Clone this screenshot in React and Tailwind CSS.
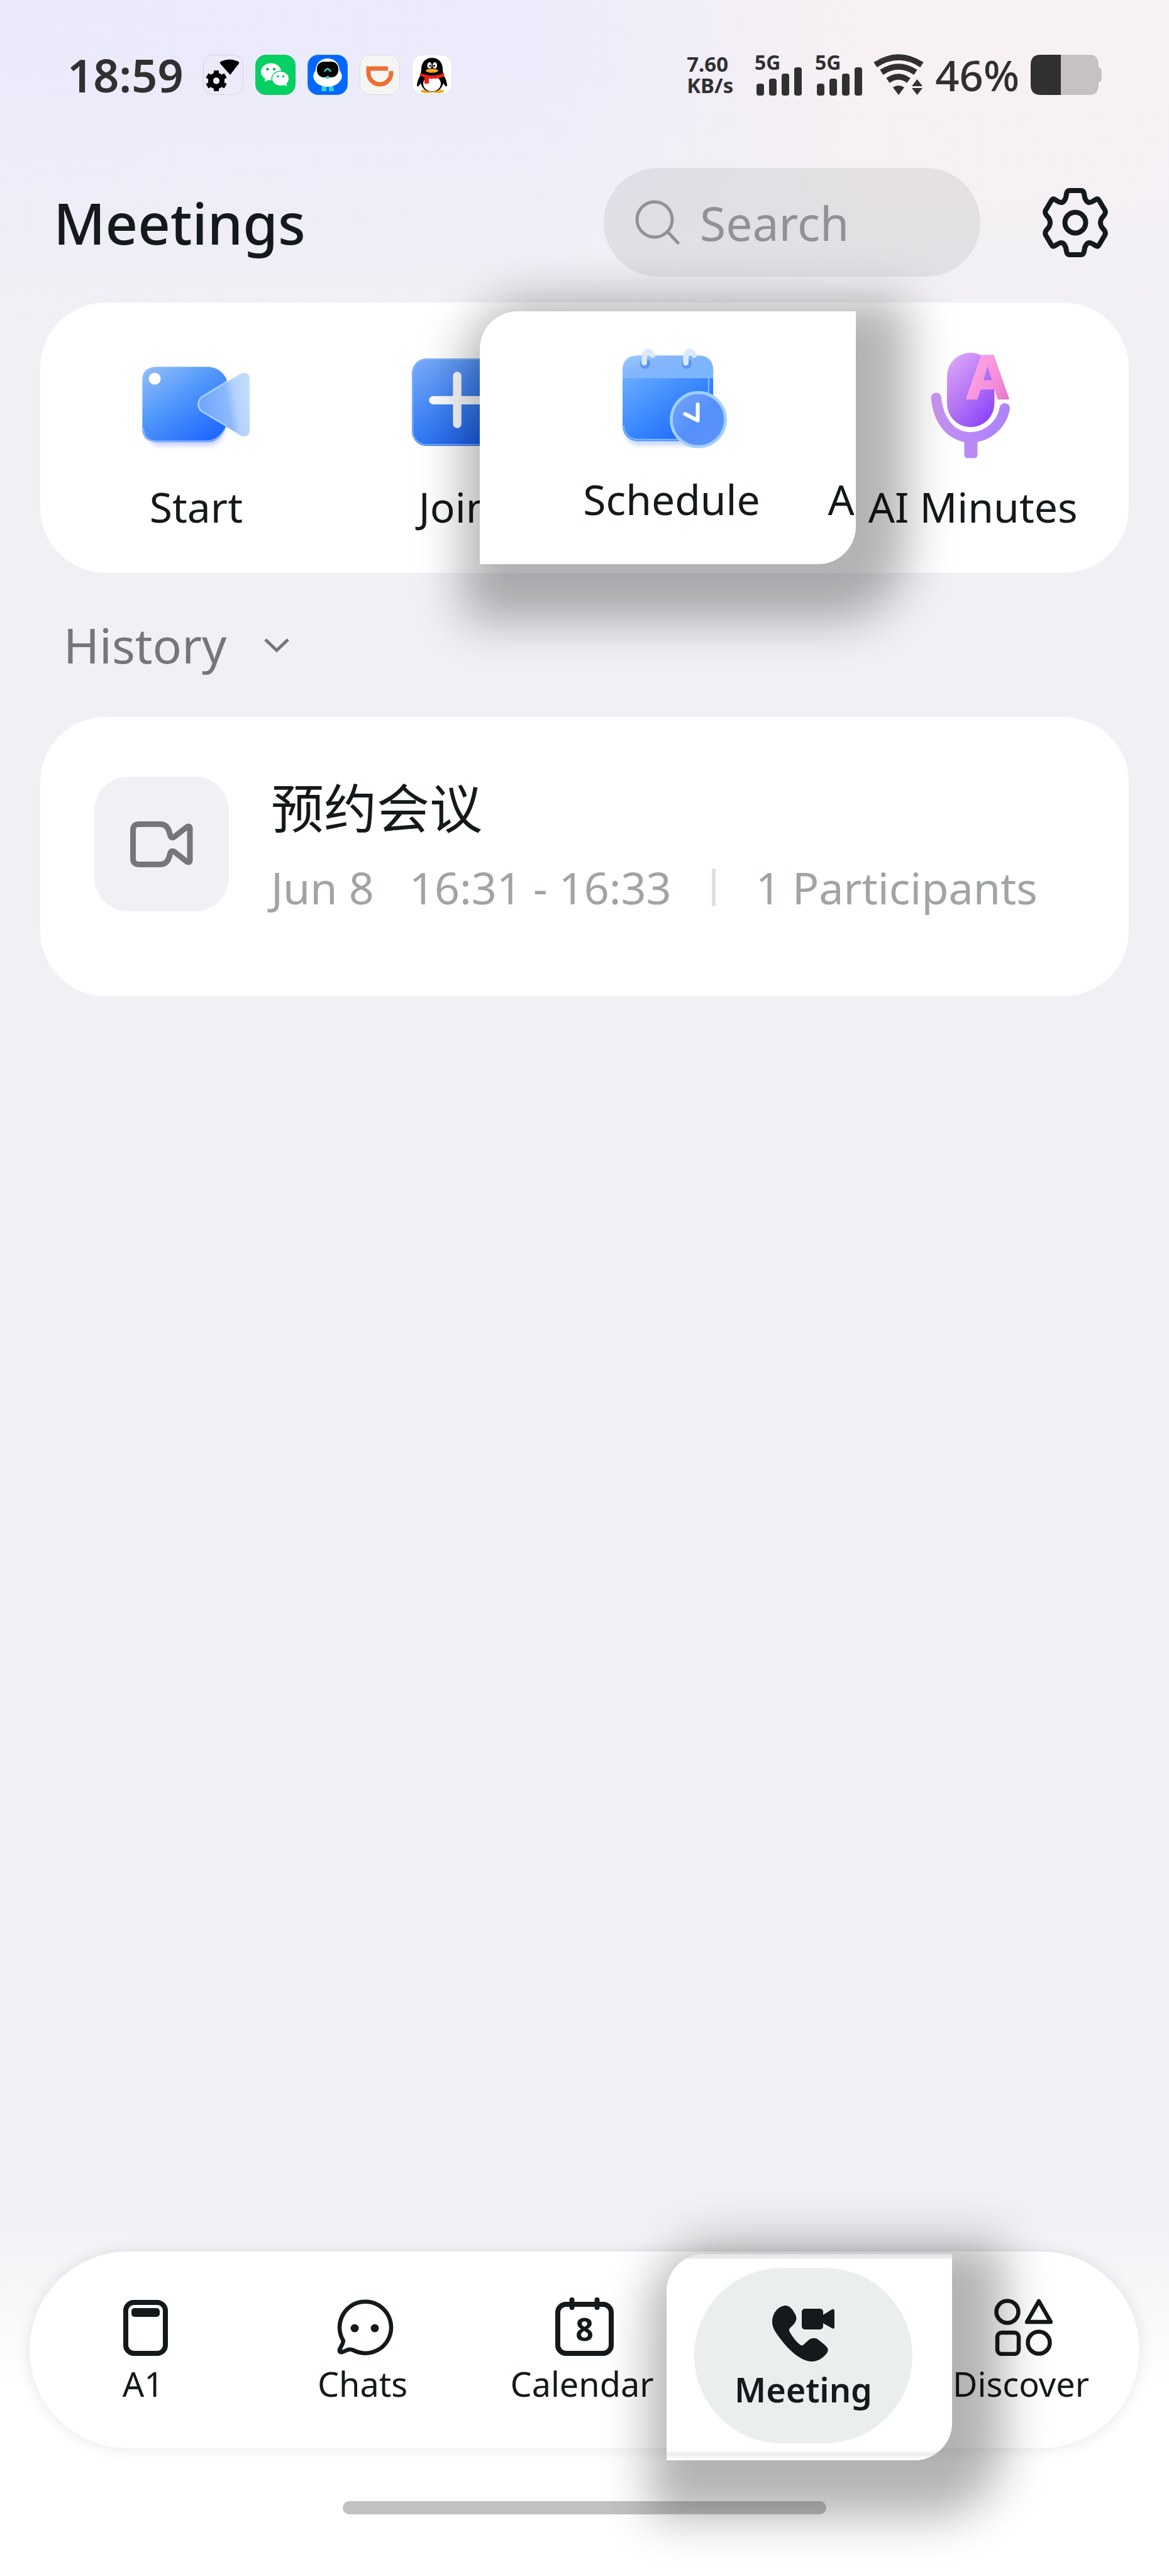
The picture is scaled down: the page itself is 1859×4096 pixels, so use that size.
import React from 'react';

// Status bar -----------------------------------------------------------

const AppTile = ({ fill, border, children }) => (
  <svg className="h-16 w-16 shrink-0" viewBox="0 0 64 64" aria-hidden="true">
    <rect x="0.5" y="0.5" width="63" height="63" rx="16" fill={fill} stroke={border} />
    {children}
  </svg>
);

const StatusApps = () => (
  <div className="flex items-center gap-[19px]">
    {/* Network tool */}
    <AppTile fill="none" border="#d3d2dd">
      <path d="M27 14Q26 11 30 10Q42 5 54 10Q58 11 57 14L43 32Z" fill="#000" />
      <g stroke="#000" strokeWidth="8">
        <circle cx="21" cy="41.5" r="9" fill="none" />
        <path d="M21 34V25M21 49V58M28 37.500L35.500 33M14 45.500L6.500 50M28 45.500L35.500 50M14 37.500L6.500 33" />
      </g>
      <circle cx="21" cy="41.5" r="5" fill="#efedfa" />
    </AppTile>
    {/* WeChat */}
    <AppTile fill="#05d162" border="#1bc26b">
      <ellipse cx="25" cy="27" rx="16" ry="13.5" fill="#fff" />
      <path d="M16 36L15 43L24 39Z" fill="#fff" />
      <ellipse cx="40" cy="38" rx="14.500" ry="12.500" fill="#05d162" />
      <ellipse cx="40" cy="38" rx="13" ry="11" fill="#fff" />
      <path d="M42 47L50 50L49 43Z" fill="#fff" />
      <g fill="#05b556">
        <circle cx="19.500" cy="23" r="2.200" />
        <circle cx="30" cy="23" r="2.200" />
        <circle cx="36" cy="34.500" r="1.800" />
        <circle cx="44.500" cy="34.500" r="1.800" />
      </g>
    </AppTile>
    {/* Assistant robot */}
    <AppTile fill="#0068ff" border="#2a79e8">
      <path d="M23 50H30V58H22ZM34 50H41L42 58H34Z" fill="#2fd3d0" />
      <path d="M32 6C44 6 51 15 51 25C55 30 56 36 53 40C49 47 41 51 32 51C23 51 14 47 11 40C8 36 9 30 13 25C13 15 20 6 32 6Z" fill="#fff" />
      <rect x="15" y="11" width="34" height="25" rx="11" fill="#000" />
      <path d="M27 27Q32 18 37 27" fill="none" stroke="#34d6c8" strokeWidth="2.500" />
      <circle cx="32" cy="36" r="2.500" fill="#34d6c8" />
    </AppTile>
    {/* Ride hailing */}
    <AppTile fill="#f6f5f4" border="#d9d8dc">
      <path d="M45 22H14V29A18 18 0 0 0 50 29V26" fill="none" stroke="#ec6f31" strokeWidth="7" />
    </AppTile>
    {/* Penguin */}
    <AppTile fill="#fff" border="#e2e1e8">
      <ellipse cx="24" cy="58" rx="10" ry="3" fill="#f2a81d" />
      <ellipse cx="41" cy="58" rx="10" ry="3" fill="#f2a81d" />
      <path d="M32 5C43 5 49 13 49 23L50 32C54 38 56 44 56 50C53 51 51 47 50 45C48 54 41 59 32 59C23 59 16 54 14 45C13 47 11 51 8 50C8 44 10 38 14 32L15 23C15 13 21 5 32 5Z" fill="#000" />
      <ellipse cx="32" cy="46" rx="14" ry="12.500" fill="#fff" />
      <ellipse cx="28" cy="17" rx="3.500" ry="5" fill="#fff" />
      <ellipse cx="36.500" cy="17" rx="3.500" ry="5" fill="#fff" />
      <circle cx="29" cy="17.500" r="1.600" fill="#000" />
      <circle cx="35.500" cy="17.500" r="1.600" fill="#000" />
      <ellipse cx="32" cy="25.500" rx="10" ry="3.200" fill="#f5a623" />
      <path d="M13 29Q32 37 51 29V35Q40 39 27 38V46H20V36Q16 35 13 33Z" fill="#e4211f" />
    </AppTile>
  </div>
);

const Signal = () => (
  <svg className="h-[90px] w-[75px]" viewBox="0 -12 75 90" fill="#303030" aria-hidden="true">
    <text x="0" y="25" className="text-[32px] font-bold">5G</text>
    <rect x="3" y="47" width="12" height="19" rx="4" />
    <rect x="23" y="39" width="12" height="27" rx="4" />
    <rect x="43" y="31" width="12" height="35" rx="4" />
    <rect x="63" y="21" width="12" height="45" rx="4" />
  </svg>
);

const WifiSignal = () => (
  <svg className="h-[66px] w-20" viewBox="0 0 80 66" aria-hidden="true">
    <g fill="none" stroke="#303030" strokeWidth="9.500">
      <path d="M3 17Q40 -7 77 17" />
      <path d="M13 29Q40 11 67 29" />
      <path d="M23 42Q40 30 56 42" />
    </g>
    <path d="M31 53Q40 47 49 53L40 65ZM69.500 40L78 51H61ZM61 54H78L69.500 65Z" fill="#303030" />
  </svg>
);

const Battery = () => (
  <svg className="h-16 w-[113px]" viewBox="0 0 113 64" aria-hidden="true">
    <path d="M48 0H93Q108 0 108 16V20Q113 21 113 28V36Q113 43 108 44V48Q108 64 93 64H48Z" fill="#c6c1c3" />
    <path d="M48 0H16Q0 0 0 16V48Q0 64 16 64H48Z" fill="#303030" />
  </svg>
);

const StatusBar = () => (
  <div className="flex h-[238px] items-center justify-between pl-[107px] pr-[107px] text-[#303030]">
    <div className="flex items-center gap-[31px]">
      <span className="text-[72px] font-semibold leading-none">18:59</span>
      <StatusApps />
    </div>
    <div className="flex items-center">
      <div className="mr-[34px] flex flex-col text-[33px] font-bold leading-[34px]">
        <span>7.60</span>
        <span>KB/s</span>
      </div>
      <div className="mr-[18px] flex gap-[21px]">
        <Signal />
        <Signal />
      </div>
      <WifiSignal />
      <span className="mx-[18px] text-[67px] font-medium leading-none">46%</span>
      <Battery />
    </div>
  </div>
);

// Header ---------------------------------------------------------------

const GearIcon = () => (
  <svg className="h-[110px] w-[106px]" viewBox="-53 -55 106 110" fill="none" stroke="#14191b" strokeWidth="8" strokeLinejoin="round" aria-hidden="true">
    <path d="M-9 -51H9Q13 -51 14 -46L15 -40Q19 -28 28 -34L33 -37Q36 -39 38 -35L47 -20Q49 -16 46 -12L42 -7Q38 0 42 7L46 12Q49 16 47 20L38 35Q36 39 33 37L28 34Q19 28 15 40L14 46Q13 51 9 51H-9Q-13 51 -14 46L-15 40Q-19 28 -28 34L-33 37Q-36 39 -38 35L-47 20Q-49 16 -46 12L-42 7Q-38 0 -42 -7L-46 -12Q-49 -16 -47 -20L-38 -35Q-36 -39 -33 -37L-28 -34Q-19 -28 -15 -40L-14 -46Q-13 -51 -9 -51Z" />
    <circle cx="0" cy="0" r="16.500" />
  </svg>
);

const Header = () => (
  <header className="mt-[29px] flex h-[173px] items-center pl-[85px] pr-24">
    <h1 className="flex-1 text-[90px] font-medium leading-[130px] text-[#14191b]">Meetings</h1>
    <label className="flex h-full w-[599px] items-center gap-8 rounded-full bg-black/[0.065] pl-[50px] pr-10">
      <svg className="h-[71px] w-[71px] shrink-0" viewBox="0 0 71 71" fill="none" stroke="#8f9296" strokeWidth="5" strokeLinecap="round" aria-hidden="true">
        <circle cx="31" cy="31" r="28" />
        <path d="M52 51L68 68" />
      </svg>
      <input
        type="text"
        aria-label="Search"
        placeholder="Search"
        className="w-full min-w-0 bg-transparent text-[75px] leading-[108px] outline-none placeholder:text-[#8f9296]"
      />
    </label>
    <button type="button" aria-label="Settings" className="ml-[98px]">
      <GearIcon />
    </button>
  </header>
);

// Quick actions --------------------------------------------------------

const StartIcon = () => (
  <svg className="h-[200px] w-[200px]" viewBox="-8 0 780 780" aria-hidden="true">
    <defs>
      <linearGradient id="startBody" x1="0.1" y1="0" x2="0.9" y2="1">
        <stop offset="0" stopColor="#8fbcf8" />
        <stop offset="0.400" stopColor="#5299fb" />
        <stop offset="1" stopColor="#1a60ff" />
      </linearGradient>
      <linearGradient id="startLens" x1="0" y1="0.200" x2="1" y2="0">
        <stop offset="0" stopColor="#70a6fc" />
        <stop offset="0.500" stopColor="#8db8fb" />
        <stop offset="0.650" stopColor="#b2d2fd" />
        <stop offset="1" stopColor="#c8e0fd" />
      </linearGradient>
      <filter id="soft" x="-20%" y="-20%" width="140%" height="150%">
        <feGaussianBlur stdDeviation="16" />
      </filter>
    </defs>
    <rect x="70" y="420" width="480" height="195" rx="90" fill="#8ca6f5" opacity="0.600" filter="url(#soft)" />
    <path d="M130 130H450Q530 130 570 205L578 470Q540 596 450 596H130Q48 590 48 510V210Q48 135 130 130Z" fill="url(#startBody)" />
    <path d="M54 510Q60 588 130 590H450Q530 585 568 500" fill="none" stroke="#8cc0fd" strokeWidth="7" />
    <path d="M660 172Q714 155 714 210V520Q714 575 660 558L415 405Q375 365 415 318Z" fill="url(#startLens)" />
    <path d="M572 498L415 405Q375 365 415 318L572 222" fill="none" stroke="#a4d3fd" strokeWidth="10" />
    <circle cx="125" cy="204" r="37" fill="#fff" />
  </svg>
);

const JoinIcon = () => (
  <svg className="h-[200px] w-[200px]" viewBox="0 0 780 780" aria-hidden="true">
    <defs>
      <linearGradient id="joinBody" x1="0.100" y1="0" x2="0.700" y2="1">
        <stop offset="0" stopColor="#78aafb" />
        <stop offset="0.500" stopColor="#4286f7" />
        <stop offset="1" stopColor="#1b62ee" />
      </linearGradient>
    </defs>
    <rect x="121" y="78" width="562" height="542" rx="90" fill="url(#joinBody)" />
    <rect x="127" y="84" width="550" height="528" rx="84" fill="none" stroke="#7db4fc" strokeWidth="7" />
    <path d="M402 186V484M253 337H551" stroke="#fff" strokeWidth="52" strokeLinecap="round" />
  </svg>
);

const ScheduleIcon = () => (
  <svg className="h-[200px] w-[200px]" viewBox="-14 8 780 780" aria-hidden="true">
    <defs>
      <linearGradient id="calBody" x1="0.100" y1="0.100" x2="0.800" y2="1">
        <stop offset="0" stopColor="#6fb0fd" />
        <stop offset="0.500" stopColor="#3f8bff" />
        <stop offset="1" stopColor="#1766ff" />
      </linearGradient>
      <linearGradient id="calTop" x1="0" y1="0" x2="1" y2="0.600">
        <stop offset="0" stopColor="#9cccfd" />
        <stop offset="0.400" stopColor="#85b5fb" />
        <stop offset="1" stopColor="#7ab5fd" />
      </linearGradient>
      <linearGradient id="clockFace" x1="0" y1="0" x2="1" y2="1">
        <stop offset="0" stopColor="#77a6fb" />
        <stop offset="0.500" stopColor="#5590fa" />
        <stop offset="1" stopColor="#5f93fb" />
      </linearGradient>
      <filter id="calSoft" x="-20%" y="-20%" width="140%" height="150%">
        <feGaussianBlur stdDeviation="14" />
      </filter>
    </defs>
    <rect x="90" y="480" width="560" height="190" rx="80" fill="#90aef0" opacity="0.500" filter="url(#calSoft)" />
    <rect x="72" y="115" width="562" height="530" rx="92" fill="url(#calBody)" />
    <path d="M72 252V207Q72 115 164 115H542Q634 115 634 207V252Z" fill="url(#calTop)" />
    <path d="M540 122Q606 130 606 207V545Q600 636 520 636H160Q85 625 78 550" fill="none" stroke="#78b9fe" strokeWidth="9" />
    <path d="M76 252H632" stroke="#7fbdfd" strokeWidth="5" />
    <g>
      <circle cx="212" cy="165" r="32" fill="#5b96ee" />
      <circle cx="470" cy="165" r="32" fill="#5b96ee" />
      <path d="M258 112Q245 82 218 92Q206 105 206 160M516 112Q503 82 476 92Q464 105 464 160" fill="none" stroke="#dbe9fc" strokeWidth="34" strokeLinecap="round" />
    </g>
    <circle cx="542" cy="512" r="168" fill="url(#clockFace)" stroke="#a0d0fd" strokeWidth="18" />
    <path d="M538 418V517L460 477" fill="none" stroke="#fff" strokeWidth="24" strokeLinecap="round" strokeLinejoin="round" />
  </svg>
);

const MinutesIcon = () => (
  <svg className="h-[200px] w-[200px]" viewBox="-27 28 780 780" aria-hidden="true">
    <defs>
      <linearGradient id="micBody" x1="0.100" y1="0" x2="0.800" y2="1">
        <stop offset="0" stopColor="#e0a9fb" />
        <stop offset="0.500" stopColor="#b678f4" />
        <stop offset="1" stopColor="#8b41fb" />
      </linearGradient>
      <linearGradient id="micStand" x1="0" y1="0" x2="1" y2="0.300">
        <stop offset="0" stopColor="#cb97f0" />
        <stop offset="1" stopColor="#b084fb" />
      </linearGradient>
      <linearGradient id="micLetter" x1="0" y1="0" x2="1" y2="1">
        <stop offset="0" stopColor="#fdb4ea" />
        <stop offset="0.600" stopColor="#f78fdb" />
        <stop offset="1" stopColor="#e06fc8" />
      </linearGradient>
    </defs>
    <rect x="203" y="70" width="294" height="462" rx="147" fill="url(#micBody)" />
    <path d="M136 350C150 500 235 595 350 595C460 595 545 510 561 415" fill="none" stroke="url(#micStand)" strokeWidth="64" strokeLinecap="round" />
    <rect x="310" y="600" width="82" height="124" rx="20" fill="#b98af4" />
    <text x="455" y="354" textAnchor="middle" fill="url(#micLetter)" stroke="url(#micLetter)" strokeWidth="10" strokeLinejoin="round" className="text-[372px] font-bold">A</text>
  </svg>
);

const Action = ({ icon, label }) => (
  <button type="button" className="flex w-full flex-col items-center text-[66px] leading-[80px] text-[#14191b]">
    {icon}
    <span className="mt-[15px] whitespace-nowrap">{label}</span>
  </button>
);

const LIFTED = 'absolute z-10 rounded-tl-[60px] rounded-br-[60px] shadow-[28px_36px_74px_54px_rgba(0,0,0,0.3)]';

const QuickActions = () => (
  <section className="mx-16 mt-[41px] rounded-[104px] bg-white px-[42px] pb-[66px] pt-[69px]">
    <ul className="grid grid-cols-4">
      <li><Action icon={<StartIcon />} label="Start" /></li>
      <li><Action icon={<JoinIcon />} label="Join" /></li>
      <li className="relative">
        {/* Raised panel around the Schedule action */}
        <div className={`${LIFTED} -left-[167px] -top-[55px] flex h-[402px] w-[598px] items-start bg-white pt-[43px]`}>
          <div className="ml-[100px] w-[411px] shrink-0">
            <Action icon={<ScheduleIcon />} label="Schedule" />
          </div>
          <span className="ml-[43px] mt-[215px] text-[66px] leading-[80px] text-[#14191b]">A</span>
        </div>
      </li>
      <li><Action icon={<MinutesIcon />} label="AI Minutes" /></li>
    </ul>
  </section>
);

// History --------------------------------------------------------------

const VideoIcon = () => (
  <svg className="h-[73px] w-[100px]" viewBox="0 0 100 73" fill="none" stroke="#74767a" strokeWidth="9" strokeLinejoin="round" aria-hidden="true">
    <path d="M14 4.500H48Q60 4.500 63 20Q65 29 71 24L90 9Q95 6 95 12V61Q95 67 90 64L71 49Q65 44 63 53Q60 68.500 48 68.500H14Q4.500 68.500 4.500 59V14Q4.500 4.500 14 4.500Z" />
  </svg>
);

const MeetingCard = ({ title, date, time, people }) => (
  <article className="mx-16 flex items-start gap-[67px] rounded-[104px] bg-white pb-[121px] pl-[86px] pr-10 pt-[95px]">
    <div className="flex h-[214px] w-[214px] shrink-0 items-center justify-center rounded-[54px] bg-[#f1f0f5]">
      <VideoIcon />
    </div>
    <div>
      <h2 className="font-['Noto_Sans_CJK_SC',sans-serif] text-[84px] leading-[92px] text-[#14191b]">{title}</h2>
      <p className="mt-8 flex items-center whitespace-nowrap text-[70px] leading-[104px] text-[#a0a4a3]">
        <span>{date}</span>
        <span className="ml-14">{time}</span>
        <span className="mx-16 h-[60px] w-[6px] bg-[#dfe2e2]" />
        <span>{people}</span>
      </p>
    </div>
  </article>
);

const History = () => (
  <main className="flex-1">
    <button type="button" className="ml-[101px] flex h-[229px] items-center gap-[60px] text-[77px] leading-[108px] text-[#74767a]">
      History
      <svg className="h-6 w-10" viewBox="0 0 40 24" fill="none" stroke="#74767a" strokeWidth="5" aria-hidden="true">
        <path d="M2 3L20 20L38 3" />
      </svg>
    </button>
    <MeetingCard title="预约会议" date="Jun 8" time="16:31 - 16:33" people="1 Participants" />
  </main>
);

// Bottom navigation ----------------------------------------------------

const DeviceIcon = () => (
  <svg className="h-[89px] w-[71px]" viewBox="0 0 71 89" aria-hidden="true">
    <rect x="4" y="4" width="63" height="81" rx="13" fill="none" stroke="#14191b" strokeWidth="8" />
    <rect x="13" y="13" width="45" height="14" rx="5" fill="#14191b" />
  </svg>
);

const ChatsIcon = () => (
  <svg className="h-[90px] w-[90px]" viewBox="0 0 90 90" aria-hidden="true">
    <path d="M10 66A41 41 0 1 1 26 81Q22 79 18 80L8 84Q3 85 4 80L9 70Z" fill="none" stroke="#14191b" strokeWidth="6.500" strokeLinejoin="round" />
    <circle cx="28" cy="46" r="6.500" fill="#14191b" />
    <circle cx="60" cy="46" r="6.500" fill="#14191b" />
  </svg>
);

const CalendarIcon = () => (
  <svg className="h-[93px] w-[93px]" viewBox="0 0 93 93" aria-hidden="true">
    <rect x="4" y="11" width="85" height="78" rx="13" fill="none" stroke="#14191b" strokeWidth="8" />
    <path d="M26.500 4V16M66.500 4V16" stroke="#14191b" strokeWidth="8" strokeLinecap="round" />
    <text x="46.500" y="69" textAnchor="middle" fill="#14191b" className="text-[50px] font-bold">8</text>
  </svg>
);

const MeetingIcon = () => (
  <svg className="h-[89px] w-[99px]" viewBox="0 0 99 89" fill="#14191b" aria-hidden="true">
    <path d="M21 0C27 0 31 4 35 11C40 18 39 23 35 29L28 36C26 39 27 41 29 44C34 52 39 58 44 62C47 64 49 64 52 60L59 54C64 51 69 51 73 54L83 62C90 68 90 72 86 77C78 86 70 89 62 89C46 88 28 72 17 58C6 44 0 36 0 26C0 14 8 1 21 0Z" />
    <rect x="47" y="5" width="34" height="33" rx="5" />
    <path d="M79 16L95 6Q99 5 99 9V34Q99 38 95 36L79 27Z" />
  </svg>
);

const DiscoverIcon = () => (
  <svg className="h-[91px] w-[93px]" viewBox="0 0 93 91" fill="none" stroke="#14191b" strokeWidth="6.500" strokeLinejoin="round" aria-hidden="true">
    <circle cx="21" cy="21" r="17.500" />
    <path d="M71 4L90 37H52Z" />
    <rect x="5" y="54" width="34" height="34" rx="7" />
    <circle cx="71" cy="70" r="17.500" />
  </svg>
);

const Tab = ({ icon, label }) => (
  <a href="#" className="flex flex-col items-center pb-[71px] pt-[72px] text-[54px] leading-[64px] text-[#14191b]">
    <span className="flex h-[94px] items-end">{icon}</span>
    <span className="mt-3 pr-2">{label}</span>
  </a>
);

const BottomNav = () => (
  <nav className="mx-[47px] rounded-full bg-white px-[10px] shadow-[0_0_24px_rgba(0,0,0,0.1)]">
    <ul className="grid grid-cols-5">
      <li><Tab icon={<DeviceIcon />} label="A1" /></li>
      <li><Tab icon={<ChatsIcon />} label="Chats" /></li>
      <li><Tab icon={<CalendarIcon />} label="Calendar" /></li>
      <li className="relative">
        {/* Raised panel around the selected tab */}
        <div className={`${LIFTED} -left-[44px] top-1 h-[328px] w-[454px] bg-[linear-gradient(to_bottom,#e5e5ea_0,#e9e9ed_6px,#fff_9px,#fff_312px,#ebebeb_318px,#fff_326px)] pl-[44px] pt-[22px]`}>
          <a href="#" aria-current="page" className="flex h-[279px] w-[347px] flex-col items-center rounded-full bg-[#eaeeef] pt-[60px] text-[54px] font-semibold leading-[64px] text-[#14191b]">
            <MeetingIcon />
            <span className="mt-3">Meeting</span>
          </a>
        </div>
      </li>
      <li><Tab icon={<DiscoverIcon />} label="Discover" /></li>
    </ul>
  </nav>
);

export default function App() {
  return (
    <div className="flex min-h-screen flex-col overflow-hidden bg-[linear-gradient(to_bottom,transparent_calc(100%-580px),#fff_calc(100%-300px)),linear-gradient(to_bottom,transparent_100px,#f1f0f5_520px),linear-gradient(to_right,#ebeafb,#ecebfb_45%,#f8f1f3_75%,#f8f1f5)] font-['Noto_Sans','Noto_Sans_CJK_SC',sans-serif]">
      <StatusBar />
      <Header />
      <QuickActions />
      <History />
      <BottomNav />
      <div className="mx-auto mb-[98px] mt-[84px] h-[21px] w-[769px] rounded-full bg-black/[0.24]" />
    </div>
  );
}
